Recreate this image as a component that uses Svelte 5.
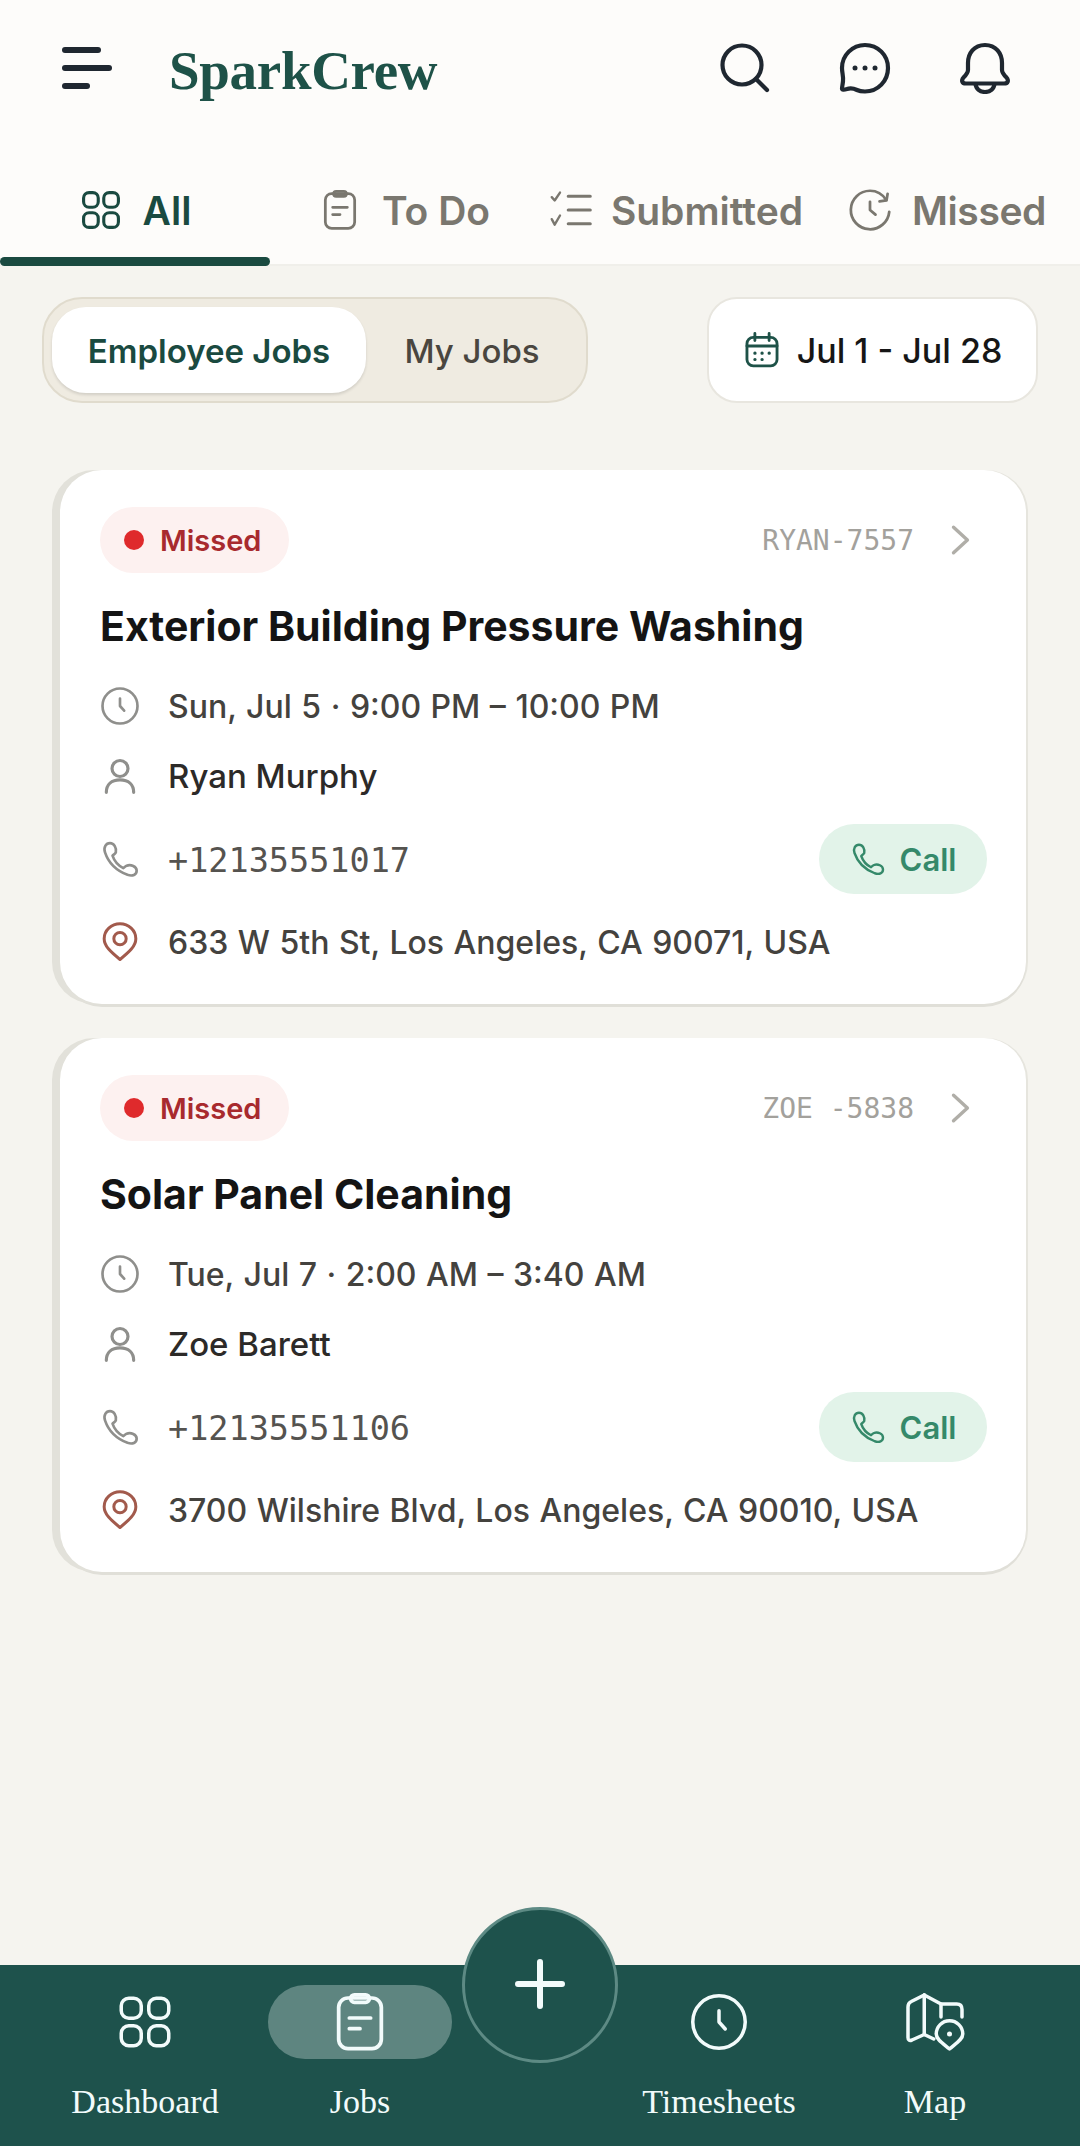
<script>
  const tabs = [
    { label: 'All', icon: 'grid', active: true },
    { label: 'To Do', icon: 'clip' },
    { label: 'Submitted', icon: 'checks' },
    { label: 'Missed', icon: 'history' }
  ];

  const jobs = [
    {
      code: 'RYAN-7557',
      title: 'Exterior Building Pressure Washing',
      time: 'Sun, Jul 5 · 9:00 PM – 10:00 PM',
      name: 'Ryan Murphy',
      phone: '+12135551017',
      address: '633 W 5th St, Los Angeles, CA 90071, USA'
    },
    {
      code: 'ZOE -5838',
      title: 'Solar Panel Cleaning',
      time: 'Tue, Jul 7 · 2:00 AM – 3:40 AM',
      name: 'Zoe Barett',
      phone: '+12135551106',
      address: '3700 Wilshire Blvd, Los Angeles, CA 90010, USA'
    }
  ];

  const phonePath = 'M6 2.500C3.500 2.500 2 5 3 8c2 6 7 11 13.500 13.500 3 1 5.500 0 5.500-2.500s-3.500-4-6-3c-1 .5-1.500 1-2 1.500-3-1.500-5.500-4.500-6.500-7.500.5-.5 1.500-1 2-2 .5-2.500-1-5.500-3.500-5.500z';
</script>

{#snippet icon(name)}
  {#if name === 'grid'}
    <svg viewBox="0 0 24 24" fill="none" stroke="currentColor" stroke-width="1.700">
      <rect x="2.500" y="2.500" width="8" height="8" rx="3" />
      <rect x="13.500" y="2.500" width="8" height="8" rx="3" />
      <rect x="2.500" y="13.500" width="8" height="8" rx="3" />
      <rect x="13.500" y="13.500" width="8" height="8" rx="3" />
    </svg>
  {:else if name === 'clip'}
    <svg viewBox="0 0 24 24" fill="none" stroke="currentColor" stroke-width="1.500" stroke-linecap="round">
      <rect x="4" y="3" width="16" height="19" rx="3.500" />
      <rect x="8.500" y="1.800" width="7" height="2.800" rx="1.400" />
      <path d="M8 10.500h8M8 14.500h4" />
    </svg>
  {:else if name === 'checks'}
    <svg viewBox="0 0 24 24" fill="none" stroke="currentColor" stroke-width="1.700" stroke-linecap="round" stroke-linejoin="round">
      <path d="M10.500 4.500h12M10.500 12h12M10.500 19.500h12" />
      <path d="M1.500 5l1.600 1.800L6 2.500M1.500 17l1.600 3L6 15" stroke-width="1.300" />
    </svg>
  {:else if name === 'history'}
    <svg viewBox="0 0 24 24" fill="none" stroke="currentColor" stroke-width="1.500" stroke-linecap="round" stroke-linejoin="round">
      <path d="M22.500 13A10.500 10.500 0 1 1 12 1.500c3.500 0 6.800 1.800 8.800 5" />
      <path d="M17.200 7.300l3.800-.5.600-3.600" />
      <path d="M12 7.500V12l3 2.500" />
    </svg>
  {:else if name === 'clock'}
    <svg viewBox="0 0 24 24" fill="none" stroke="currentColor" stroke-width="1.600" stroke-linecap="round" stroke-linejoin="round">
      <circle cx="12" cy="12" r="10.500" />
      <path d="M12 7.500V12l2.500 2.800" />
    </svg>
  {:else if name === 'person'}
    <svg viewBox="0 0 24 24" fill="none" stroke="currentColor" stroke-width="1.900" stroke-linecap="round">
      <circle cx="12" cy="7.500" r="4.800" />
      <path d="M3.800 21.800c0-4.800 3.200-7.500 8.200-7.500s8.200 2.700 8.200 7.500" />
    </svg>
  {:else if name === 'phone'}
    <svg viewBox="0 0 24 24" fill="none" stroke="currentColor" stroke-width="1.600" stroke-linejoin="round">
      <path d={phonePath} />
    </svg>
  {:else if name === 'pin'}
    <svg viewBox="0 0 24 24" fill="none" stroke="currentColor" stroke-width="1.800" stroke-linejoin="round">
      <path d="M12 22.500C6.500 18 2.500 14.500 2.500 10a9.500 9 0 0 1 19 0c0 4.500-4 8-9.500 12.500z" />
      <circle cx="12" cy="10" r="3.700" />
    </svg>
  {:else if name === 'map'}
    <svg viewBox="0 0 24 24" fill="none" stroke="currentColor" stroke-width="1.400" stroke-linecap="round" stroke-linejoin="round">
      <path d="M7.700 1.200L2.500 3.800Q1.200 4.400 1.200 6v12.200q0 1.600 1.600 1L7.700 17l3.800 1.800" />
      <path d="M7.700 1.200l6.700 3.600h6.300q2.100 0 2.100 2.200v3" />
      <path d="M7.700 1.200V17M14.400 4.800V10" />
      <path d="M17.800 22.800c-2.800-2.300-5.300-3.800-5.300-6a5.300 5.300 0 0 1 10.600 0c0 2.200-2.600 3.700-5.300 6z" />
      <circle cx="17.800" cy="16.800" r="1" fill="currentColor" stroke="none" />
    </svg>
  {/if}
{/snippet}

<div class="page">
  <header class="topbar">
    <div class="burger"><span class="b1"></span><span class="b2"></span><span class="b3"></span></div>
    <h1 class="logo">SparkCrew</h1>
    <div class="top-icons">
      <svg viewBox="0 0 52 52" fill="none" stroke="currentColor" stroke-width="4.200" stroke-linecap="round">
        <circle cx="23" cy="23" r="19.500" />
        <path d="M37 37l11 11" />
      </svg>
      <svg viewBox="0 0 52 52" fill="none" stroke="currentColor" stroke-width="4.200" stroke-linejoin="round">
        <path d="M26 3C13.500 3 3 13 3 26c0 5 1.500 8 1 13-.2 3-1 6-1 7.500 0 1.500 2 1.500 5 .5 4-1.500 7-.5 10 1 2 1 5 1.500 8 1.500 13 0 23-10.500 23-23.500S39 3 26 3z" />
        <circle cx="16" cy="26" r="2.500" fill="currentColor" stroke="none" />
        <circle cx="26" cy="26" r="2.500" fill="currentColor" stroke="none" />
        <circle cx="36" cy="26" r="2.500" fill="currentColor" stroke="none" />
      </svg>
      <svg viewBox="0 0 52 52" fill="none" stroke="currentColor" stroke-width="4.200" stroke-linejoin="round">
        <path d="M26 3C15 3 9 11.500 9 21v7c0 3-2 5-4.500 7.500C2 38.500 3 41.500 7 41.500h38c4 0 5-3 2.500-6C45 33 43 31 43 28v-7C43 11.500 37 3 26 3z" />
        <path d="M16.500 42c.5 5 4.500 8 9.500 8s9-3 9.500-8" />
      </svg>
    </div>
  </header>

  <nav class="tabs">
    {#each tabs as tab}
      <div class="tab" class:active={tab.active}>
        <span class="tab-icon">{@render icon(tab.icon)}</span>
        <span>{tab.label}</span>
      </div>
    {/each}
  </nav>

  <main class="content">
    <div class="filters">
      <div class="toggle">
        <span class="seg on">Employee Jobs</span>
        <span class="seg">My Jobs</span>
      </div>
      <div class="date">
        <svg viewBox="0 0 24 24" fill="none" stroke="currentColor" stroke-width="1.800" stroke-linecap="round">
          <rect x="2.500" y="4" width="19" height="18" rx="4" />
          <path d="M2.500 9.500h19M7.500 1.500v4.500M16.500 1.500v4.500" />
          <path d="M7.500 14h.1M12 14h.1M16.500 14h.1M7.500 18h.1M12 18h.1" stroke-width="2" />
        </svg>
        <span>Jul 1 - Jul 28</span>
      </div>
    </div>

    {#each jobs as job}
      <article class="card">
        <div class="card-top">
          <span class="badge"><i class="dot"></i>Missed</span>
          <span class="code">{job.code}</span>
          <svg class="chev" viewBox="0 0 20 30" fill="none" stroke="currentColor" stroke-width="3.200" stroke-linecap="round" stroke-linejoin="round">
            <path d="M3 3l13 12L3 27" />
          </svg>
        </div>
        <h2>{job.title}</h2>
        <div class="row time"><span class="ri">{@render icon('clock')}</span>{job.time}</div>
        <div class="row name"><span class="ri">{@render icon('person')}</span>{job.name}</div>
        <div class="row phone">
          <span class="ri">{@render icon('phone')}</span>
          <span class="num">{job.phone}</span>
          <span class="call"><span class="ci">{@render icon('phone')}</span>Call</span>
        </div>
        <div class="row addr"><span class="ri pin">{@render icon('pin')}</span>{job.address}</div>
      </article>
    {/each}
  </main>

  <footer class="bottom">
    <div class="fab">
      <svg viewBox="0 0 50 50" fill="none" stroke="currentColor" stroke-width="6" stroke-linecap="round">
        <path d="M25 3v44M3 25h44" />
      </svg>
    </div>
    <div class="nav-item">
      <span class="nav-icon">{@render icon('grid')}</span>
      <span>Dashboard</span>
    </div>
    <div class="nav-item">
      <span class="nav-icon sel">{@render icon('clip')}</span>
      <span>Jobs</span>
    </div>
    <div class="nav-gap"></div>
    <div class="nav-item">
      <span class="nav-icon">{@render icon('clock')}</span>
      <span>Timesheets</span>
    </div>
    <div class="nav-item">
      <span class="nav-icon">{@render icon('map')}</span>
      <span>Map</span>
    </div>
  </footer>
</div>

<style>
  :global(body) {
    margin: 0;
    background: #f5f4ef;
  }

  .page {
    width: 1080px;
    height: 2146px;
    display: flex;
    flex-direction: column;
    font-family: Inter, "Liberation Sans", sans-serif;
    color: #161616;
    overflow: hidden;
  }

  .topbar {
    height: 136px;
    padding: 0 69px 0 62px;
    display: flex;
    align-items: center;
    background: #fdfcfa;
    box-sizing: border-box;
  }

  .burger {
    width: 50px;
    display: flex;
    flex-direction: column;
    gap: 12px;
    margin-right: 57px;
  }

  .burger span {
    display: block;
    height: 6px;
    border-radius: 3px;
    background: #1f2730;
  }

  .b1 { width: 39px; }
  .b2 { width: 50px; }
  .b3 { width: 28px; }

  .logo {
    margin: 4px 0 0;
    font-family: "Liberation Serif", serif;
    font-weight: 700;
    font-size: 55px;
    letter-spacing: -0.3px;
    color: #1e5248;
  }

  .top-icons {
    margin-left: auto;
    display: flex;
    gap: 68px;
    color: #1f2730;
  }

  .top-icons svg {
    width: 52px;
    height: 52px;
    display: block;
  }

  .tabs {
    height: 130px;
    display: flex;
    background: #fdfcfa;
    border-bottom: 2px solid #f0efea;
    box-sizing: border-box;
    padding-top: 20px;
    font-size: 39px;
    font-weight: 600;
    color: #7a776f;
  }

  .tab {
    display: flex;
    align-items: center;
    justify-content: center;
    gap: 20px;
    position: relative;
    box-sizing: border-box;
  }

  .tab:nth-child(1) { width: 270px; color: #1a4a40; }
  .tab:nth-child(2) { width: 270px; padding-right: 2px; }
  .tab:nth-child(3) { width: 290px; padding-right: 18px; gap: 18px; }
  .tab:nth-child(4) { width: 250px; padding-right: 16px; }
  .tab:nth-child(4) span:last-child { letter-spacing: -0.4px; }

  .tab.active::after {
    content: "";
    position: absolute;
    left: 0;
    right: 0;
    bottom: -2px;
    height: 9px;
    border-radius: 5px;
    background: #1a4a40;
  }

  .tab-icon {
    width: 44px;
    height: 44px;
    display: block;
  }

  .tab-icon :global(svg) {
    width: 100%;
    height: 100%;
    display: block;
  }

  .content {
    flex: 1;
    padding: 31px 0 0;
    display: flex;
    flex-direction: column;
    align-items: center;
    gap: 34px;
  }

  .filters {
    width: 996px;
    display: flex;
    align-items: center;
    justify-content: space-between;
    margin-bottom: 33px;
  }

  .toggle {
    width: 546px;
    height: 106px;
    border: 2px solid #e0dbcd;
    background: #efebe1;
    border-radius: 40px;
    box-sizing: border-box;
    padding: 8px;
    display: flex;
    align-items: center;
    font-size: 33px;
    font-weight: 500;
    color: #4a463f;
  }

  .seg {
    flex: 1;
    text-align: center;
    padding-top: 2px;
  }

  .seg.on {
    flex: none;
    width: 314px;
    height: 84px;
    line-height: 84px;
    background: #fff;
    border-radius: 34px;
    color: #1a4a40;
    font-weight: 600;
    box-shadow: 0 2px 3px rgba(0, 0, 0, 0.12);
  }

  .date {
    width: 331px;
    height: 106px;
    background: #fff;
    border: 2px solid #e8e6df;
    border-radius: 30px;
    box-sizing: border-box;
    display: flex;
    align-items: center;
    justify-content: center;
    gap: 16px;
    font-size: 34px;
    font-weight: 500;
  }

  .date svg {
    width: 38px;
    height: 38px;
    color: #1e5248;
  }

  .card {
    width: 966px;
    height: 534px;
    margin-left: 6px;
    box-sizing: border-box;
    background: #fff;
    border-radius: 42px;
    padding: 37px 39px 0 40px;
    box-shadow: -8px 0 0 #e2e1da, 0 3px 0 #e0dfd8, 2px 0 0 #e6e5de;
  }

  .card-top {
    display: flex;
    align-items: center;
    height: 66px;
    color: #b0aea8;
  }

  .badge {
    display: flex;
    align-items: center;
    gap: 16px;
    width: 189px;
    height: 66px;
    box-sizing: border-box;
    padding-left: 24px;
    border-radius: 33px;
    background: #fdf1f0;
    color: #a82a2e;
    font-size: 29px;
    font-weight: 600;
  }

  .dot {
    width: 20px;
    height: 20px;
    border-radius: 50%;
    background: #df2a2c;
  }

  .code {
    margin-left: auto;
    font-family: "DejaVu Sans Mono", monospace;
    font-size: 28px;
    color: #a3a19c;
  }

  .chev {
    width: 22px;
    height: 32px;
    margin: 0 15px 0 36px;
  }

  h2 {
    margin: 25px 0 0;
    font-size: 41px;
    font-weight: 700;
    line-height: 56px;
    color: #141414;
  }

  .row {
    display: flex;
    align-items: center;
    font-size: 32px;
    word-spacing: 1px;
    font-weight: 500;
    color: #44423e;
  }

  .time { margin-top: 30px; height: 44px; }
  .name { margin-top: 26px; height: 44px; color: #2c2a28; font-size: 33px; word-spacing: 0; }
  .phone { margin-top: 26px; height: 70px; }
  .addr { margin-top: 26px; height: 44px; }

  .ri {
    width: 40px;
    height: 40px;
    margin-right: 28px;
    color: #8f8f8c;
    flex: none;
  }

  .ri :global(svg) {
    width: 100%;
    height: 100%;
    display: block;
  }

  .pin { color: #a25a4c; }

  .num {
    font-family: "DejaVu Sans Mono", monospace;
    font-weight: 400;
    font-size: 33.500px;
    word-spacing: 0;
    color: #55534f;
    margin-top: 3px;
  }

  .call {
    margin-left: auto;
    width: 168px;
    height: 70px;
    border-radius: 35px;
    background: #e2f3e9;
    color: #35896a;
    font-size: 31px;
    font-weight: 600;
    display: flex;
    align-items: center;
    justify-content: center;
    gap: 14px;
  }

  .ci {
    width: 36px;
    height: 36px;
  }

  .ci :global(svg) {
    width: 100%;
    height: 100%;
    display: block;
  }

  .bottom {
    height: 181px;
    background: #1e524c;
    position: relative;
    display: flex;
    color: #f2fbfb;
    font-family: "Liberation Serif", serif;
    font-size: 34px;
  }

  .fab {
    position: absolute;
    left: 462px;
    top: -58px;
    width: 156px;
    height: 156px;
    border-radius: 50%;
    box-sizing: border-box;
    border: 3px solid #5d8a84;
    background: #1e524c;
    display: flex;
    align-items: center;
    justify-content: center;
  }

  .fab svg {
    width: 50px;
    height: 50px;
    margin-top: -3px;
  }

  .nav-item {
    flex: none;
    display: flex;
    flex-direction: column;
    align-items: center;
    padding-top: 20px;
    gap: 24px;
  }

  .nav-item:nth-child(2) { width: 290px; }
  .nav-item:nth-child(3) { width: 140px; }
  .nav-gap { flex: none; width: 214px; }
  .nav-item:nth-child(5) { width: 150px; }
  .nav-item:nth-child(6) { width: 282px; }

  .nav-icon {
    width: 184px;
    height: 74px;
    flex: none;
    display: flex;
    align-items: center;
    justify-content: center;
    border-radius: 37px;
  }

  .nav-icon.sel {
    background: #5e8580;
  }

  .nav-icon :global(svg) {
    width: 60px;
    height: 60px;
    display: block;
    stroke-width: 1.400;
  }

  .nav-icon.sel :global(svg) {
    width: 64px;
    height: 64px;
  }
</style>
